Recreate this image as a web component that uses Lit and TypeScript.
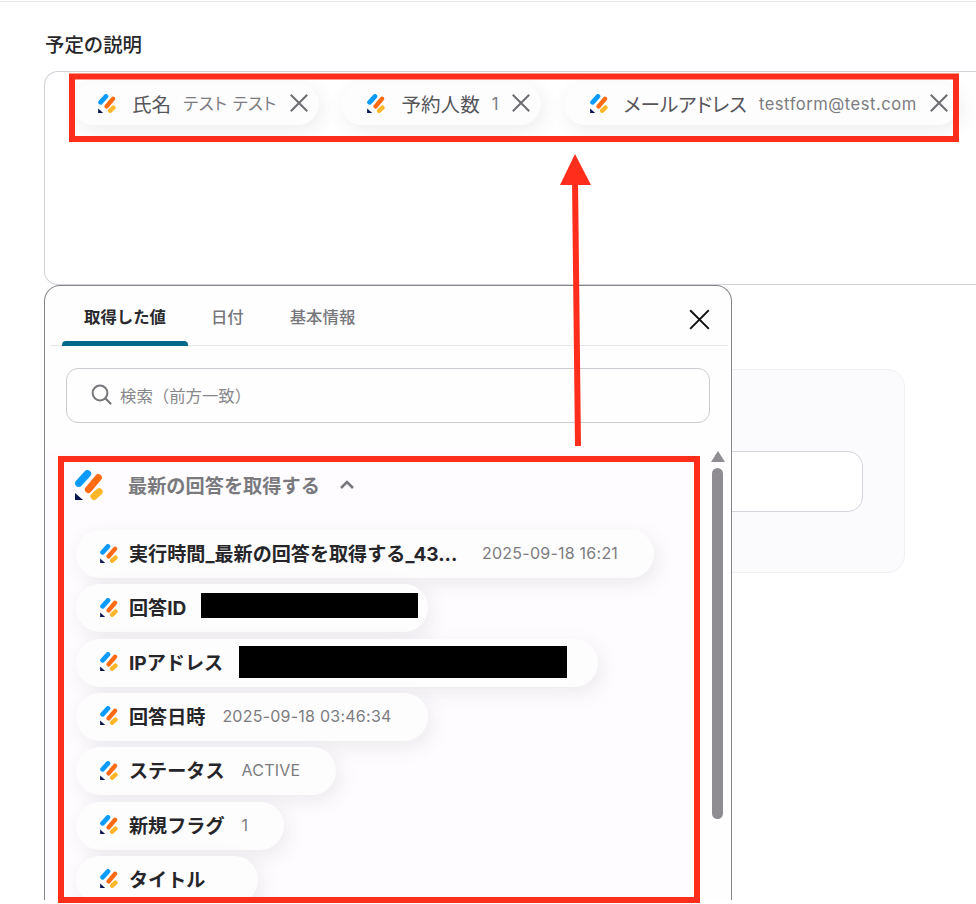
import { LitElement, html, css, svg } from "lit";
import { customElement } from "lit/decorators.js";

const logo = (cls: string) => html`<svg class=${cls} viewBox="0 0 28 30" aria-hidden="true">
  <path d="M0 23 L0 30 L8 30 Z" fill="#0a1551"></path>
  <path d="M3.8 13.2 L12.4 3.8" stroke="#0a9bff" stroke-width="7.4" stroke-linecap="round" fill="none"></path>
  <path d="M13.4 19.6 L23.4 7.6" stroke="#ff6a13" stroke-width="7" stroke-linecap="round" fill="none"></path>
  <path d="M19 26.4 L24.2 21.6" stroke="#ffb629" stroke-width="7" stroke-linecap="round" fill="none"></path>
</svg>`;

const topChips = [
  { label: "氏名", value: "テスト テスト" },
  { label: "予約人数", value: "1" },
  { label: "メールアドレス", value: "testform@test.com" },
];

const rows: { label: string; value?: string; redact?: string; trunc?: boolean }[] = [
  { label: "実行時間_最新の回答を取得する_43...", value: "2025-09-18 16:21", trunc: true },
  { label: "回答ID", redact: "r1" },
  { label: "IPアドレス", redact: "r2" },
  { label: "回答日時", value: "2025-09-18 03:46:34" },
  { label: "ステータス", value: "ACTIVE" },
  { label: "新規フラグ", value: "1" },
  { label: "タイトル", value: "" },
];

@customElement("app-root")
export class AppRoot extends LitElement {
  static styles = css`
    :host {
      display: block;
      position: relative;
      width: 976px;
      height: 904px;
      overflow: hidden;
      background: #fff;
      font-family: Inter, "Noto Sans CJK JP", sans-serif;
      color: #2a2a2e;
    }
    .rule { height: 1px; margin-top: 1px; background: #e6e6e8; }
    .field-label {
      margin: 30px 0 13px 45px;
      font-size: 19.4px;
      line-height: 26px;
      font-weight: 500;
      color: #27272a;
    }
    .box {
      margin-left: 44px;
      height: 214px;
      border: 1px solid #cfd2d8;
      border-right: 0;
      border-radius: 14px 0 0 14px;
      background: #fff;
      overflow: hidden;
      display: flex;
      gap: 22.5px;
      padding: 11px 0 0 27px;
      box-sizing: border-box;
    }
    .chip {
      flex: none;
      height: 42px;
      display: flex;
      align-items: center;
      padding: 0 10px 2px 26px;
      border-radius: 21px;
      background: #fefdfe;
      box-shadow: 3px 5px 18px rgba(60, 50, 80, 0.09);
      box-sizing: border-box;
    }
    .chip .lg { width: 18px; height: 19px; margin-right: 16px; flex: none; }
    .chip .name { font-size: 19.6px; color: #55555a; margin-right: 12px; white-space: nowrap; font-feature-settings: "palt"; }
    .chip .val { font-size: 16.6px; line-height: 24px; padding-top: 2px; color: #7c7c80; margin-right: 12px; white-space: nowrap; letter-spacing: 0.5px; font-feature-settings: "palt"; }
    .chip .x { width: 20px; height: 20px; flex: none; }
    .behind {
      margin: 84px 71px 0 300px;
      height: 204px;
      box-sizing: border-box;
      padding: 81px 41px 0 0;
      background: #fbfafc;
      border: 1px solid #f1f0f3;
      border-radius: 18px;
    }
    .behind div {
      height: 61px;
      background: #fff;
      border: 1px solid #d4d5da;
      border-radius: 15px;
      box-sizing: border-box;
    }
    .panel {
      position: absolute;
      left: 44px;
      top: 285px;
      width: 688px;
      height: 615px;
      box-sizing: border-box;
      background: #fefefe;
      border: 1px solid #85858a;
      border-bottom: 0;
      border-radius: 16px 16px 0 0;
      overflow: hidden;
      display: flex;
      flex-direction: column;
    }
    .tabs {
      flex: none;
      height: 60px;
      margin: 0 3px 0 5px;
      padding-left: 12px;
      border-bottom: 1px solid #e6e6e8;
      display: flex;
      align-items: stretch;
      box-sizing: border-box;
      font-size: 16.4px;
      font-weight: 500;
      color: #77777c;
    }
    .tab { padding: 1px 23px 0; display: flex; align-items: center; position: relative; white-space: nowrap; }
    .tab.on { padding: 1px 22px 0; color: #2a2a2e; font-weight: 700; }
    .tab.on::after {
      content: "";
      position: absolute;
      left: 0;
      right: 0;
      bottom: -1px;
      height: 5px;
      background: #00688b;
      border-radius: 4px 4px 0 0;
    }
    .close { width: 23px; height: 23px; margin: 22px 17px 0 auto; flex: none; }
    .search {
      flex: none;
      margin: 22px 21px 0;
      height: 55px;
      box-sizing: border-box;
      border: 1px solid #cbccd1;
      border-radius: 12px;
      display: flex;
      align-items: center;
      padding: 0 0 2px 24px;
      font-size: 16.4px;
      color: #88888c;
    }
    .search svg { width: 21px; height: 21px; margin-right: 8px; }
    .body { flex: 1; min-height: 0; display: flex; justify-content: space-between; padding: 28px 7px 0 0; }
    .list { flex: none; width: 650px; min-width: 0; background: #fefcfe; overflow: hidden; padding-left: 30px; box-sizing: border-box; }
    .head { display: flex; align-items: center; height: 30px; margin-top: 19px; }
    .head .lg { width: 28px; height: 30px; margin-right: 25px; flex: none; }
    .head b { font-size: 19.2px; font-weight: 700; color: #7a7a7e; }
    .head svg.chev { width: 16px; height: 10px; margin-left: 19px; }
    .pills { display: flex; flex-direction: column; align-items: flex-start; gap: 6.33px; margin: 30px 0 0 1px; }
    .pill {
      flex: none;
      height: 48px;
      display: flex;
      align-items: center;
      padding: 0 36px 2px 24px;
      border-radius: 24px;
      background: #fefdfe;
      box-shadow: 4px 6px 20px rgba(60, 50, 80, 0.09);
      box-sizing: border-box;
    }
    .pill .lg { width: 18px; height: 19px; margin-right: 11px; flex: none; }
    .pill .name { font-size: 19.1px; font-weight: 700; color: #26262a; white-space: nowrap; }
    .pill .name.trunc { width: 336px; }
    .pill .val { font-size: 16px; color: #7c7c80; margin-left: 17px; white-space: nowrap; letter-spacing: 0.24px; }
    .pill .redact { background: #000; flex: none; }
    .redact.r1 { width: 217px; height: 25px; margin: 0 -26px 3px 15px; }
    .redact.r2 { width: 328px; height: 32px; margin: 0 -5px 0 16px; }
    .bar { flex: none; width: 13px; display: flex; flex-direction: column; align-items: center; }
    .bar i { display: block; width: 0; height: 0; border: 7px solid transparent; border-top: 0; border-bottom: 11px solid #8f8d92; }
    .bar span { display: block; width: 11px; height: 351px; margin-top: 6px; background: #8f8d92; border-radius: 6px; }
    .overlay { position: absolute; left: 0; top: 0; width: 976px; height: 904px; pointer-events: none; }
  `;

  render() {
    const x = (c: string, w: number) => svg`<path d="M2 2 L14 14 M14 2 L2 14" stroke=${c} stroke-width=${w} stroke-linecap="square" fill="none"></path>`;
    return html`
      <div class="rule"></div>
      <div class="field-label">予定の説明</div>
      <div class="box">
        ${topChips.map(
          (c) => html`<div class="chip">
            ${logo("lg")}<span class="name">${c.label}</span><span class="val">${c.value}</span>
            <svg class="x" viewBox="0 0 16 16">${x("#6d6d72", 1.6)}</svg>
          </div>`
        )}
      </div>
      <div class="behind"><div></div></div>

      <section class="panel">
        <div class="tabs">
          <div class="tab on">取得した値</div>
          <div class="tab">日付</div>
          <div class="tab">基本情報</div>
          <svg class="close" viewBox="0 0 16 16">${x("#111", 1.4)}</svg>
        </div>
        <div class="search">
          <svg viewBox="0 0 21 21"><circle cx="9" cy="9" r="7.4" fill="none" stroke="#77777c" stroke-width="2"></circle><path d="M14.5 14.5 L19.5 19.5" stroke="#77777c" stroke-width="2.2" stroke-linecap="round"></path></svg>
          検索（前方一致）
        </div>
        <div class="body">
          <div class="list">
            <div class="head">
              ${logo("lg")}<b>最新の回答を取得する</b>
              <svg class="chev" viewBox="0 0 16 10"><path d="M2 8 L8 2 L14 8" fill="none" stroke="#77777c" stroke-width="2.6"></path></svg>
            </div>
            <div class="pills">
              ${rows.map(
                (r) => html`<div class="pill">
                  ${logo("lg")}<span class="name ${r.trunc ? "trunc" : ""}">${r.label}</span>
                  ${r.value !== undefined ? html`<span class="val">${r.value}</span>` : ""}
                  ${r.redact ? html`<span class="redact ${r.redact}"></span>` : ""}
                </div>`
              )}
            </div>
          </div>
          <div class="bar"><i></i><span></span></div>
        </div>
      </section>

      <svg class="overlay" viewBox="0 0 976 904">
        <rect x="72" y="76.5" width="884" height="62.5" fill="none" stroke="#ff2e1c" stroke-width="6"></rect>
        <rect x="61" y="459" width="636" height="441" fill="none" stroke="#ff2e1c" stroke-width="6"></rect>
        <path d="M575 180 L578 446" stroke="#ff2e1c" stroke-width="6" fill="none"></path>
        <path d="M575 154 L591 185 L560 185 Z" fill="#ff2e1c"></path>
      </svg>
    `;
  }
}
